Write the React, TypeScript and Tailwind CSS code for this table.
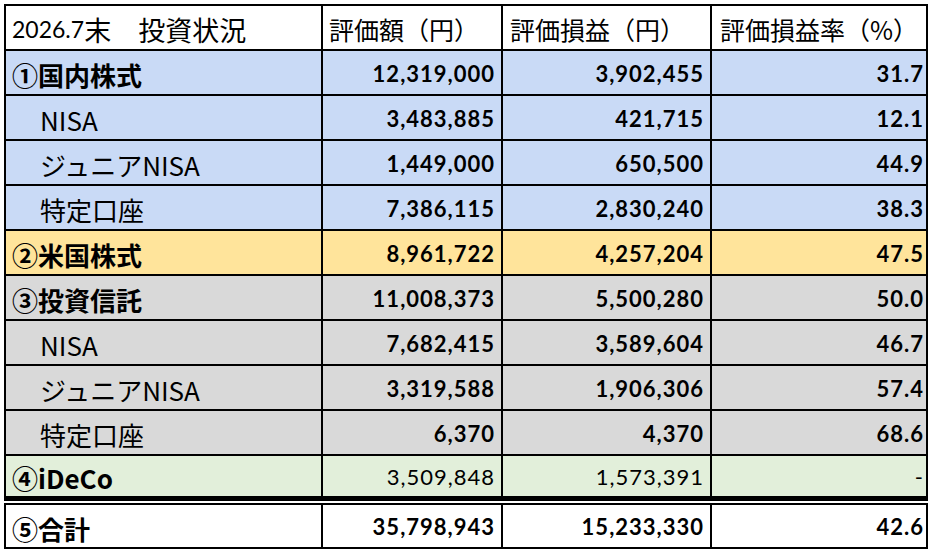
type Row = {
  label: string;
  value: string;
  gain: string;
  rate: string;
  kind: "section" | "sub";
  bg: string;
};

const rows: Row[] = [
  { label: "①国内株式", value: "12,319,000", gain: "3,902,455", rate: "31.7", kind: "section", bg: "bg-[#c9daf6]" },
  { label: "NISA", value: "3,483,885", gain: "421,715", rate: "12.1", kind: "sub", bg: "bg-[#c9daf6]" },
  { label: "ジュニアNISA", value: "1,449,000", gain: "650,500", rate: "44.9", kind: "sub", bg: "bg-[#c9daf6]" },
  { label: "特定口座", value: "7,386,115", gain: "2,830,240", rate: "38.3", kind: "sub", bg: "bg-[#c9daf6]" },
  { label: "②米国株式", value: "8,961,722", gain: "4,257,204", rate: "47.5", kind: "section", bg: "bg-[#ffe49b]" },
  { label: "③投資信託", value: "11,008,373", gain: "5,500,280", rate: "50.0", kind: "section", bg: "bg-[#d9d9d9]" },
  { label: "NISA", value: "7,682,415", gain: "3,589,604", rate: "46.7", kind: "sub", bg: "bg-[#d9d9d9]" },
  { label: "ジュニアNISA", value: "3,319,588", gain: "1,906,306", rate: "57.4", kind: "sub", bg: "bg-[#d9d9d9]" },
  { label: "特定口座", value: "6,370", gain: "4,370", rate: "68.6", kind: "sub", bg: "bg-[#d9d9d9]" },
];

const grid = "grid grid-cols-[315px_178px_207px_214px] gap-[2px] bg-black p-[2px] w-[924px]";
const jp = "font-['Noto_Sans_CJK_JP',sans-serif]";
const num = "font-['Lato','Liberation_Sans',sans-serif] text-[22px] tracking-[1px] text-black";

function Label({ text, kind }: { text: string; kind: "section" | "sub" }) {
  return (
    <div
      className={`flex items-center text-[26px] leading-none text-black pt-[5px] ${jp} ${
        kind === "section" ? "font-bold pl-[6px]" : "pl-[34px]"
      }`}
    >
      {text}
    </div>
  );
}

function Num({ text, pr, bold = true }: { text: string; pr: string; bold?: boolean }) {
  return (
    <div
      className={`flex items-center justify-end pt-[1px] ${num} ${pr} ${
        bold ? "font-bold" : "font-normal text-[#1a1a1a]"
      }`}
    >
      {text}
    </div>
  );
}

export default function App() {
  return (
    <div className="w-[930px] h-[549px] bg-white overflow-hidden pt-[4px] pl-[4px]">
      <div className={`${grid} auto-rows-[43px]`}>
        <div className="bg-white flex items-center pl-[6px] pt-[3px] leading-none text-black">
          <span className="text-[23px] font-['Lato',sans-serif]">2026.7</span>
          <span className={`text-[27px] ${jp}`}>末　投資状況</span>
        </div>
        <div className={`bg-white flex items-center pl-[6px] pt-[3px] text-[25px] leading-none text-black ${jp}`}>
          評価額（円）
        </div>
        <div className={`bg-white flex items-center pl-[7px] pt-[3px] text-[25px] leading-none text-black ${jp}`}>
          評価損益（円）
        </div>
        <div className={`bg-white flex items-center pl-[8px] pt-[3px] text-[25px] leading-none text-black ${jp}`}>
          評価損益率（%）
        </div>

        {rows.map((r, i) => (
          <div key={i} className="contents">
            <div className={`${r.bg} flex`}>
              <Label text={r.label} kind={r.kind} />
            </div>
            <div className={`${r.bg} flex justify-end`}>
              <Num text={r.value} pr="pr-[6px]" />
            </div>
            <div className={`${r.bg} flex justify-end`}>
              <Num text={r.gain} pr="pr-[6px]" />
            </div>
            <div className={`${r.bg} flex justify-end`}>
              <Num text={r.rate} pr="pr-[2px]" />
            </div>
          </div>
        ))}

        <div className={`bg-[#e2efda] h-[40px] flex items-center pl-[6px] pt-[3px] text-[26px] leading-none font-bold text-black ${jp}`}>
          ④iDeCo
        </div>
        <div className="bg-[#e2efda] h-[40px] flex justify-end">
          <Num text="3,509,848" pr="pr-[6px]" bold={false} />
        </div>
        <div className="bg-[#e2efda] h-[40px] flex justify-end">
          <Num text="1,573,391" pr="pr-[6px]" bold={false} />
        </div>
        <div className="bg-[#e2efda] h-[40px] flex justify-end">
          <Num text="-" pr="pr-[2px]" bold={false} />
        </div>
      </div>

      <div className={`${grid} auto-rows-[42px] mt-[2px]`}>
        <div className="bg-white flex">
          <Label text="⑤合計" kind="section" />
        </div>
        <div className="bg-white flex justify-end">
          <Num text="35,798,943" pr="pr-[6px]" />
        </div>
        <div className="bg-white flex justify-end">
          <Num text="15,233,330" pr="pr-[6px]" />
        </div>
        <div className="bg-white flex justify-end">
          <Num text="42.6" pr="pr-[2px]" />
        </div>
      </div>
    </div>
  );
}
